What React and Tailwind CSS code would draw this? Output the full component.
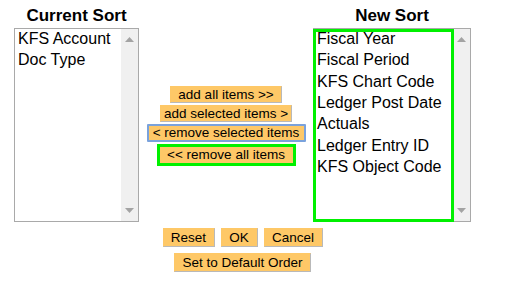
import React from "react";

const FONT = { fontFamily: '"Liberation Sans", Arial, sans-serif' };

const CURRENT = ["KFS Account", "Doc Type"];
const NEW_SORT = [
  "Fiscal Year",
  "Fiscal Period",
  "KFS Chart Code",
  "Ledger Post Date",
  "Actuals",
  "Ledger Entry ID",
  "KFS Object Code",
];

function Scrollbar() {
  return (
    <div className="w-[17px] shrink-0 bg-[#f0f0f0] flex flex-col items-center justify-between py-[8px]">
      <svg width="9" height="5" viewBox="0 0 9 5">
        <polygon points="0,5 9,5 4.5,0" fill="#a3a3a3" />
      </svg>
      <svg width="9" height="5" viewBox="0 0 9 5">
        <polygon points="0,0 9,0 4.5,5" fill="#a3a3a3" />
      </svg>
    </div>
  );
}

function ListBox({ items, width, focused }) {
  return (
    <div
      className="relative flex h-[194px] border border-[#a9a9a9] bg-white"
      style={{ width }}
    >
      <div className="flex-1 pl-[3px] -mt-[1px] text-[16px] leading-[21.33px] text-black">
        {items.map((it) => (
          <div key={it} className="whitespace-nowrap">{it}</div>
        ))}
      </div>
      <Scrollbar />
      {focused && (
        <div className="absolute left-[-1px] top-0 bottom-[-1px] w-[141px] border-[3px] border-[#00f000] pointer-events-none" />
      )}
    </div>
  );
}

function Btn({ children, className = "" }) {
  return (
    <button
      type="button"
      className={`bg-[#fec867] text-black text-[13.5px] leading-none border border-[#fec867] border-r-[#b9b9b9] border-b-[#b9b9b9] flex items-center justify-center whitespace-nowrap ${className}`}
    >
      {children}
    </button>
  );
}

export default function App() {
  return (
    <div className="w-[519px] h-[301px] bg-white pl-[14px] pt-[6px]" style={FONT}>
      <div className="w-[457px] grid grid-cols-[125px_174px_158px]">
        <div className="text-center font-bold text-[17px] leading-[19px] h-[22px]">Current Sort</div>
        <div />
        <div className="text-center font-bold text-[17px] leading-[19px] h-[22px]">New Sort</div>

        <ListBox items={CURRENT} width={125} />

        <div className="flex flex-col items-center gap-[2px] pt-[58px]">
          <Btn className="w-[112px] h-[17px]">add all items &gt;&gt;</Btn>
          <Btn className="w-[132px] h-[17px]">add selected items &gt;</Btn>
          <button
            type="button"
            className="w-[159px] h-[18px] bg-[#fec867] border-2 border-[#7aa2dc] rounded-[1px] text-[13.5px] leading-none text-black whitespace-nowrap"
          >
            &lt; remove selected items
          </button>
          <div className="border-[3px] border-[#00f000] w-[139px] h-[22px] flex">
            <Btn className="flex-1 h-full border-0 bg-[#fec867]">&lt;&lt; remove all items</Btn>
          </div>
        </div>

        <ListBox items={NEW_SORT} width={158} focused />
      </div>

      <div className="w-[457px] flex flex-col items-center mt-[6px] gap-[6px]">
        <div className="flex gap-[6px]">
          <Btn className="w-[52px] h-[19px]">Reset</Btn>
          <Btn className="w-[37px] h-[19px]">OK</Btn>
          <Btn className="w-[59px] h-[19px]">Cancel</Btn>
        </div>
        <Btn className="w-[137px] h-[19px]">Set to Default Order</Btn>
      </div>
    </div>
  );
}
